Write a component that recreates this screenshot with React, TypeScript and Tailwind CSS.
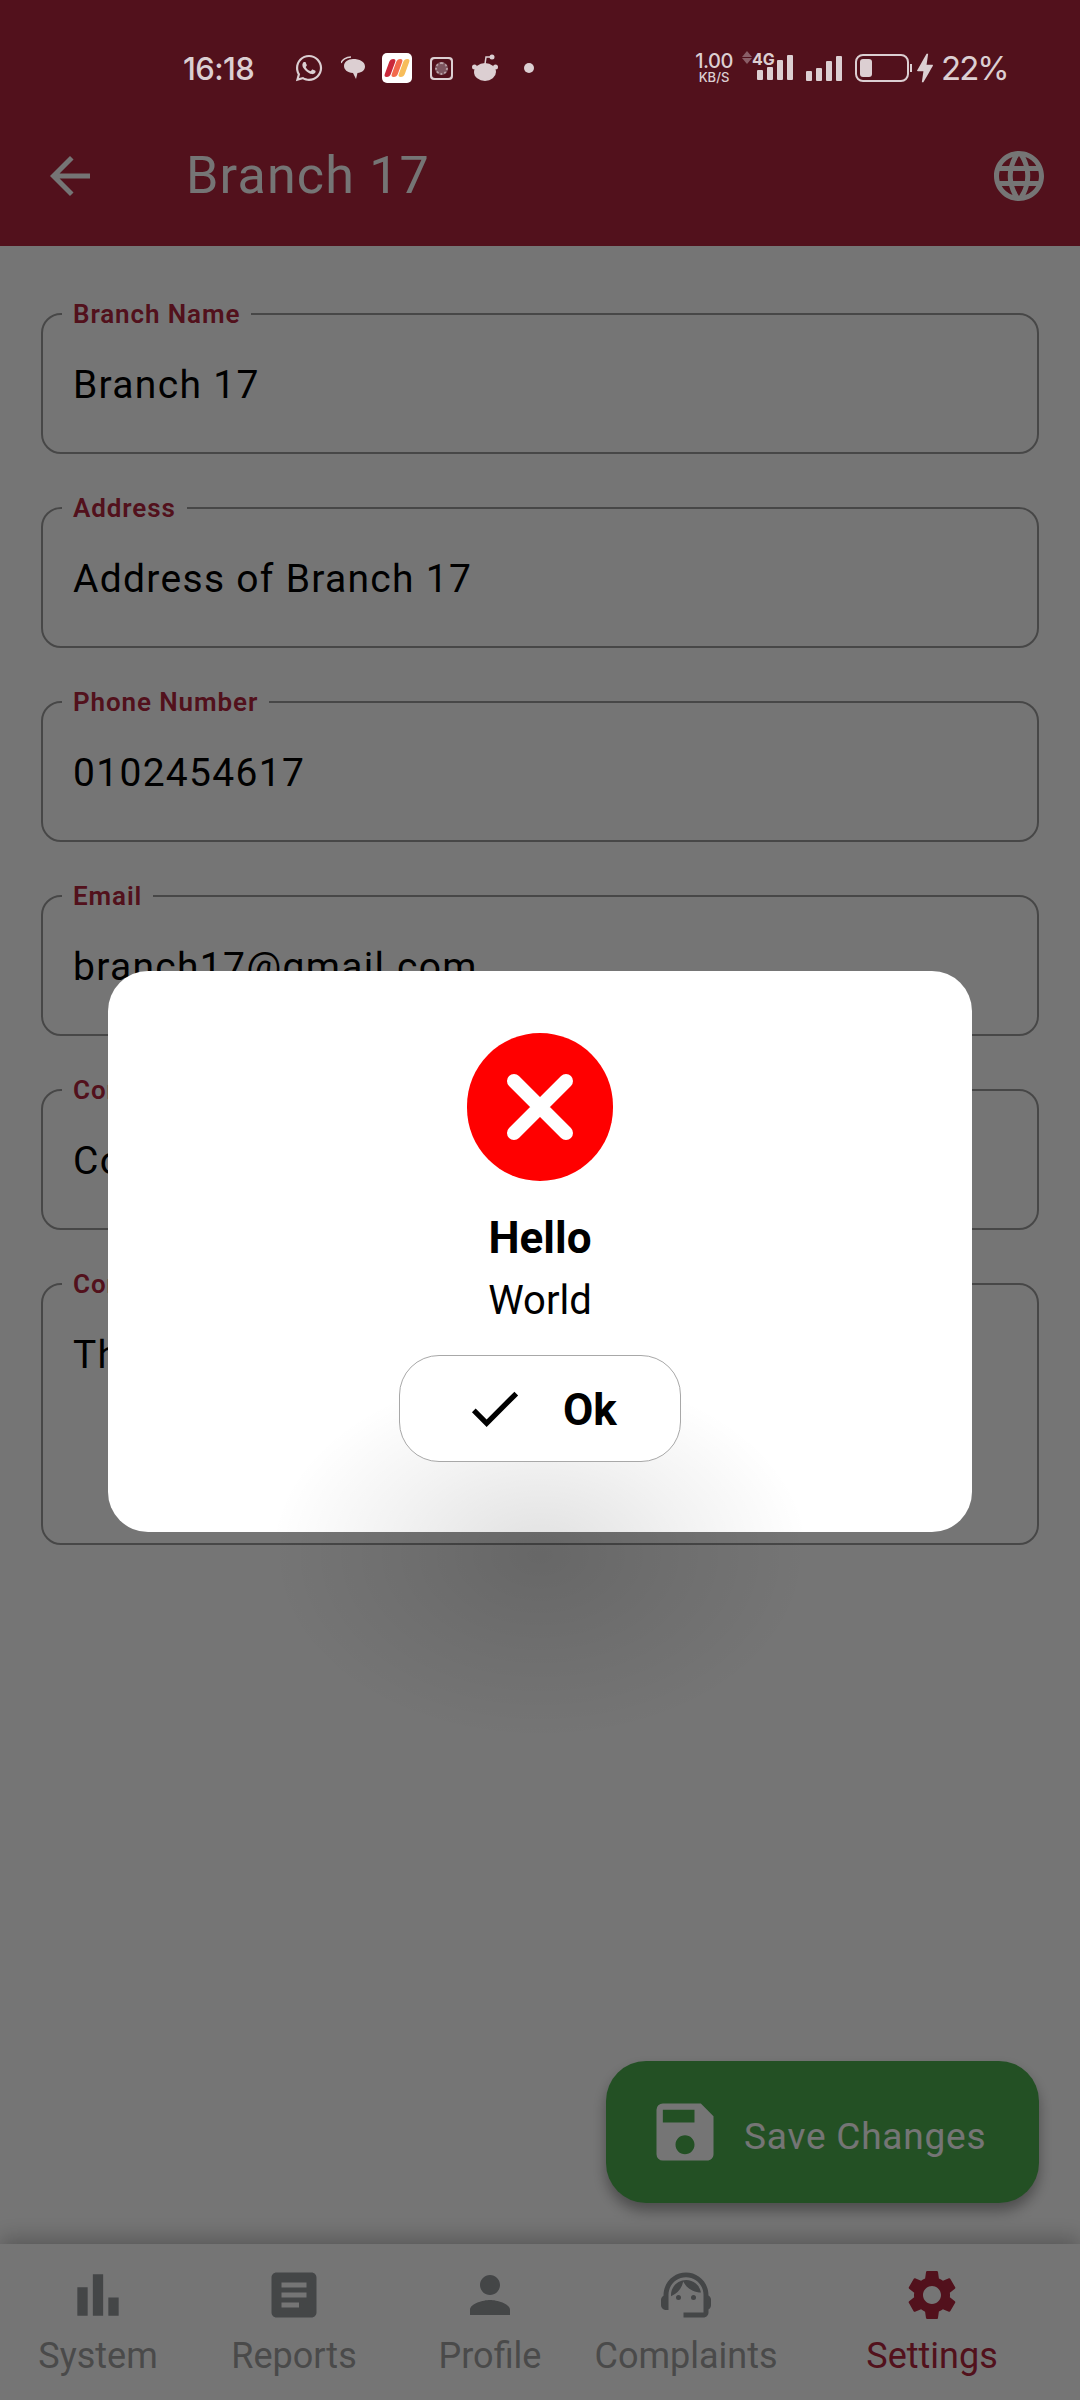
import { MdArrowBack, MdLanguage, MdCheck, MdSave, MdSettings, MdSupportAgent, MdPerson, MdArticle, MdBarChart, MdBolt } from 'react-icons/md';
import { FaWhatsapp } from 'react-icons/fa';

const FONT = "font-['Roboto',sans-serif]";

const FIELDS = [
  { label: 'Branch Name', value: 'Branch 17' },
  { label: 'Address', value: 'Address of Branch 17' },
  { label: 'Phone Number', value: '0102454617' },
  { label: 'Email', value: 'branch17@gmail.com' },
  { label: 'Contact Person', value: 'Contact of Branch 17' },
];

function Field({ label, value, tall }: { label: string; value: string; tall?: boolean }) {
  return (
    <div className={`relative rounded-[20px] border-2 border-[#9c9c9c] px-[30px] pt-[45px] ${tall ? 'h-[262px]' : 'h-[141px]'}`}>
      <span className="absolute left-[19px] -top-[17px] bg-white px-[11px] text-[26px] leading-[32px] font-semibold tracking-[0.9px] text-[#b2253d]">
        {label}
      </span>
      <p className="text-[39px] leading-[50px] tracking-[1.3px] text-black">{value}</p>
    </div>
  );
}

function SignalBars({ heights }: { heights: number[] }) {
  return (
    <div className="flex items-end gap-[4px]">
      {heights.map((h, i) => (
        <span key={i} className="w-[6px] rounded-[1px] bg-[#dccfd2]" style={{ height: h }} />
      ))}
    </div>
  );
}

function StatusBar() {
  return (
    <div className="absolute left-0 right-0 top-0 z-30 flex h-[136px] items-center pl-[183px] pr-[75px] font-['Inter',sans-serif] text-[#dccfd2]">
      <span className="w-[72px] text-[31px] leading-none font-medium tracking-[-0.6px]">16:18</span>
      <FaWhatsapp className="ml-[39px] text-[30px]" />
      <svg className="ml-[17px]" width="24" height="24" viewBox="0 0 24 24" fill="#dccfd2">
        <path d="M12 3c6.500 0 12 2.500 12 7.500 0 3.500-3 6-7.500 6.500l-1.500 6-3-6C6 16.500 3 13.500 3 10c0-4 4-7 9-7z" />
        <path d="M0 7c1-3 5-6 10-6" stroke="#dccfd2" strokeWidth="1.500" fill="none" />
      </svg>
      <div className="ml-[17px] flex h-[30px] w-[30px] items-center justify-center gap-[1px] rounded-[5px] bg-white">
        <span className="h-[18px] w-[6px] -skew-x-[20deg] rounded-[3px] bg-[#c9283a]" />
        <span className="h-[18px] w-[6px] -skew-x-[20deg] rounded-[3px] bg-[#f2694b]" />
        <span className="h-[18px] w-[6px] -skew-x-[20deg] rounded-[3px] bg-[#f7bd5a]" />
      </div>
      <div className="ml-[18px] flex h-[23px] w-[23px] items-center justify-center rounded-[4px] bg-[#dccfd2]">
        <div className="flex h-[19px] w-[19px] items-center justify-center rounded-[3px] bg-[#52111c]">
          <span className="h-[13px] w-[13px] rounded-full border-2 border-dotted border-[#b9a0a6] bg-[#7d5660]" />
        </div>
      </div>
      <svg className="ml-[19px]" width="26" height="28" viewBox="0 0 26 28" fill="#dccfd2">
        <ellipse cx="13" cy="18" rx="11" ry="9" />
        <circle cx="2.500" cy="13" r="2.500" />
        <circle cx="23.500" cy="13" r="2.500" />
        <path d="M13 10 L14 3 L19 3" stroke="#dccfd2" strokeWidth="1.500" fill="none" />
        <circle cx="20" cy="3" r="2.500" />
      </svg>
      <span className="ml-[26px] h-[10px] w-[10px] rounded-full bg-[#dccfd2]" />
      <div className="ml-auto flex items-center">
        <div className="flex w-[40px] flex-col items-center font-medium">
          <span className="text-[20px] leading-[19px] tracking-[-0.5px]">1.00</span>
          <span className="text-[13px] leading-[13px]">KB/S</span>
        </div>
        <div className="ml-[8px] flex flex-col gap-[1px] self-start pt-[2px]">
          <span className="h-0 w-0 border-x-[5px] border-b-[6px] border-x-transparent border-b-[#8a5f68]" />
          <span className="h-0 w-0 border-x-[5px] border-t-[6px] border-x-transparent border-t-[#8a5f68]" />
        </div>
        <div className="relative ml-[1px] h-[28px] w-[40px]">
          <span className="absolute -left-[1px] -top-[3px] text-[16px] leading-none font-bold">4G</span>
          <div className="absolute bottom-[2px] left-[4px]">
            <SignalBars heights={[10, 13, 20, 25]} />
          </div>
        </div>
        <div className="ml-[13px]">
          <SignalBars heights={[10, 13, 20, 25]} />
        </div>
        <div className="relative ml-[13px] flex h-[28px] w-[54px] items-center rounded-[8px] border-2 border-[#dccfd2] px-[3px]">
          <span className="h-[18px] w-[12px] rounded-[3px] bg-[#dccfd2]" />
          <span className="absolute -right-[5px] top-[8px] h-[8px] w-[2px] bg-[#dccfd2]" />
        </div>
        <MdBolt className="-ml-[3px] text-[38px]" />
        <span className="-ml-[3px] w-[64px] text-[33px] leading-none tracking-[-2px]">22%</span>
      </div>
    </div>
  );
}

function Dialog() {
  return (
    <div className="absolute inset-0 z-20 flex items-center justify-center bg-black/54 pt-[103px]">
      <div className="flex h-[561px] w-[864px] flex-col items-center rounded-[40px] bg-white pt-[62px]">
        <div className="flex h-[148px] w-[146px] items-center justify-center rounded-full bg-[#ff0000]">
          <svg width="90" height="90" viewBox="0 0 90 90">
            <path d="M19 19 L71 71 M71 19 L19 71" stroke="white" strokeWidth="14" strokeLinecap="round" />
          </svg>
        </div>
        <h2 className="mt-[29px] text-[44px] leading-[56px] font-bold text-black">Hello</h2>
        <p className="mt-[9px] text-[40px] leading-[52px] text-black">World</p>
        <button className="relative z-20 mt-[28px] flex h-[107px] w-[282px] items-center rounded-[40px] border border-[#a8a8a8] bg-white pl-[63px]">
          <MdCheck className="text-[63px] text-black" />
          <span className="ml-[37px] pt-[2px] text-[44px] leading-none font-bold text-black">Ok</span>
        </button>
      </div>
      <div className="pointer-events-none absolute left-[270px] top-[1370px] z-10 h-[370px] w-[540px] bg-[radial-gradient(closest-side,rgba(0,0,0,0.12),rgba(0,0,0,0.05)_55%,rgba(0,0,0,0))]" />
    </div>
  );
}

const NAV = [
  { label: 'Reports', icon: <MdArticle className="text-[60px]" /> },
  { label: 'Profile', icon: <MdPerson className="text-[60px]" /> },
  { label: 'Complaints', icon: <MdSupportAgent className="text-[60px]" /> },
];

function NavItem({ label, icon, active }: { label: string; icon: React.ReactNode; active?: boolean }) {
  return (
    <div className={`flex flex-col items-center ${active ? 'text-[#b2253d]' : 'text-[#a2a2a2]'}`}>
      <div className={`flex h-[60px] w-[70px] items-center justify-center ${active ? '' : 'text-[#94989c]'}`}>{icon}</div>
      <span className="mt-[7px] text-[36px] leading-[48px] whitespace-nowrap">{label}</span>
    </div>
  );
}

export default function App() {
  return (
    <div className={`relative flex h-[2400px] w-[1080px] flex-col overflow-hidden bg-white ${FONT}`}>
      <header className="flex h-[246px] shrink-0 items-end bg-[#b2253d] pl-[40px] pr-[33px] pb-[40px] text-white">
        <MdArrowBack className="text-[60px]" />
        <h1 className="ml-[86px] text-[52px] leading-[60px] tracking-[1.200px]">Branch 17</h1>
        <MdLanguage className="ml-auto -mr-[2px] text-[60px]" />
      </header>

      <main className="relative flex-1">
        <div className="flex flex-col gap-[53px] px-[41px] pt-[67px]">
          {FIELDS.map((f) => (
            <Field key={f.label} label={f.label} value={f.value} />
          ))}
          <Field label="Contact Details" value="This branch" tall />
        </div>
        <button className="absolute bottom-[41px] right-[41px] flex h-[142px] w-[433px] items-center rounded-[40px] bg-[#4caf50] pl-[41px] text-white shadow-[0_8px_14px_rgba(0,0,0,0.35)]">
          <MdSave className="text-[76px]" />
          <span className="ml-[21px] pt-[8px] text-[37px] leading-none tracking-[0.8px]">Save Changes</span>
        </button>
      </main>

      <nav className="grid h-[156px] shrink-0 grid-cols-[196px_196px_196px_196px_1fr] bg-white pt-[21px] shadow-[0_-6px_20px_rgba(0,0,0,0.25)]">
        <NavItem label="System" icon={<MdBarChart className="text-[62px]" />} />
        {NAV.map((n) => (
          <NavItem key={n.label} label={n.label} icon={n.icon} />
        ))}
        <NavItem label="Settings" icon={<MdSettings className="text-[60px]" />} active />
      </nav>

      <Dialog />
      <StatusBar />
    </div>
  );
}
